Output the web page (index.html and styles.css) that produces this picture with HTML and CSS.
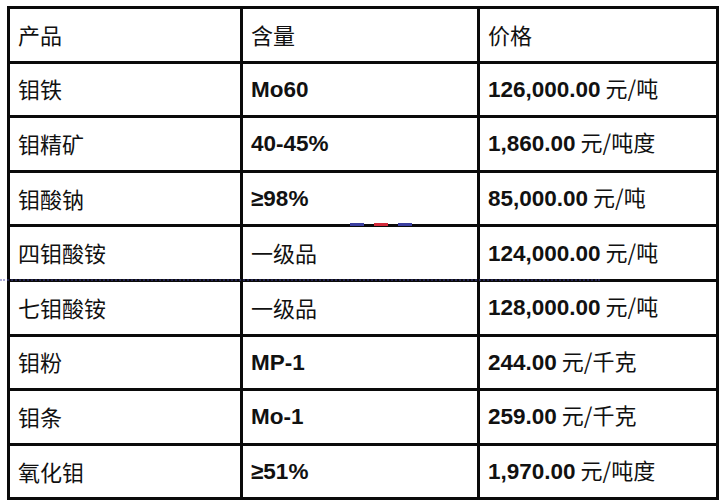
FILE: index.html
```html
<!DOCTYPE html>
<html lang="zh">
<head>
<meta charset="utf-8">
<link rel="stylesheet" href="styles.css">
</head>
<body>
<div class="page">
<table class="price-table">
  <colgroup><col class="c1"><col class="c2"><col class="c3"></colgroup>
  <tr><td>产品</td><td>含量</td><td>价格</td></tr>
  <tr><td>钼铁</td><td><span class="num">Mo60</span></td><td><span class="num">126,000.00</span> 元/吨</td></tr>
  <tr><td>钼精矿</td><td><span class="num">40-45%</span></td><td><span class="num">1,860.00</span> 元/吨度</td></tr>
  <tr><td>钼酸钠</td><td><span class="num">≥98%</span></td><td><span class="num">85,000.00</span> 元/吨</td></tr>
  <tr><td>四钼酸铵</td><td>一级品</td><td><span class="num">124,000.00</span> 元/吨</td></tr>
  <tr><td>七钼酸铵</td><td>一级品</td><td><span class="num">128,000.00</span> 元/吨</td></tr>
  <tr><td>钼粉</td><td><span class="num">MP-1</span></td><td><span class="num">244.00</span> 元/千克</td></tr>
  <tr><td>钼条</td><td><span class="num">Mo-1</span></td><td><span class="num">259.00</span> 元/千克</td></tr>
  <tr><td>氧化钼</td><td><span class="num">≥51%</span></td><td><span class="num">1,970.00</span> 元/吨度</td></tr>
</table>
<div class="mark-dashes"><span class="d blue"></span><span class="d red"></span><span class="d blue"></span></div>
<div class="mark-line"></div>
</div>
</body>
</html>
```
FILE: styles.css
```css
html, body {
  margin: 0;
  padding: 0;
  background: #ffffff;
}
.page {
  position: relative;
  padding: 6px 8px 0 7px;
  width: 709px;
}
.price-table {
  border-collapse: collapse;
  width: 709px;
  table-layout: fixed;
  color: #111111;
}
.c1 { width: 233px; }
.c2 { width: 237px; }
.c3 { width: 239px; }
.price-table td {
  border: 3px solid #0a0a0a;
  height: 49.6px;
  padding: 0 0 2px 8px;
  vertical-align: middle;
  white-space: nowrap;
  font-family: "Noto Sans CJK SC", "Noto Sans", sans-serif;
  font-weight: 400;
  font-size: 22px;
  line-height: 30px;
}
.num {
  font-family: "Liberation Sans", Arial, sans-serif;
  font-weight: 700;
  font-size: 22.5px;
}
.mark-dashes {
  position: absolute;
  left: 350px;
  top: 223px;
  display: flex;
  gap: 10px;
}
.mark-dashes .d {
  display: block;
  width: 14px;
  height: 3px;
}
.mark-dashes .blue { background: #3b3fa0; }
.mark-dashes .red { background: #d22a3a; }
.mark-line {
  position: absolute;
  left: 0;
  top: 279px;
  width: 600px;
  height: 0;
  border-top: 2px dotted rgba(70, 70, 170, 0.45);
}
```
